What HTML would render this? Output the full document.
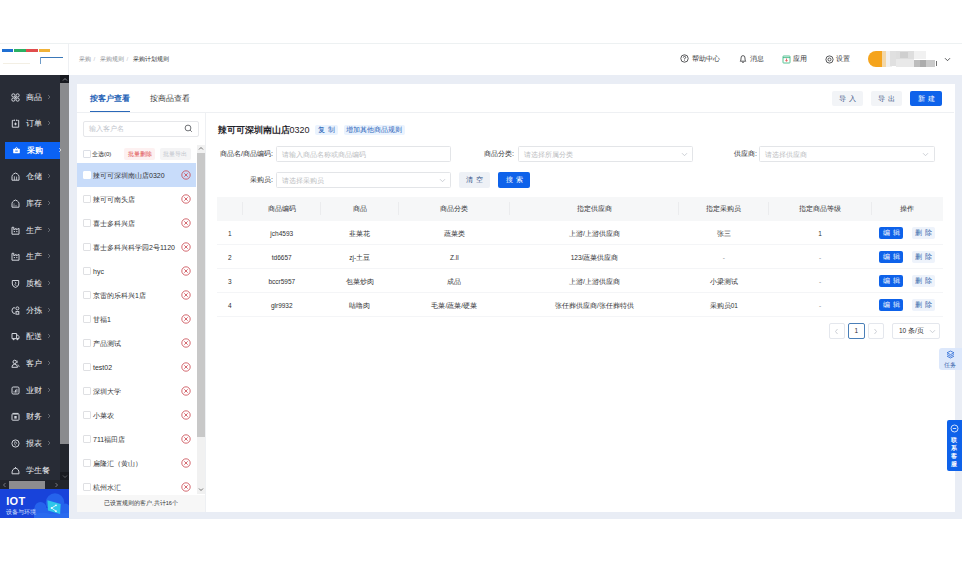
<!DOCTYPE html>
<html><head><meta charset="utf-8"><style>
*{box-sizing:border-box}
html,body{margin:0;padding:0;width:962px;height:562px;overflow:hidden;background:#fff;font-family:"Liberation Sans",sans-serif;color:#303133}
.a{position:absolute;white-space:nowrap}
.mi{position:absolute;left:0;width:60px;height:17px;color:#eceef2;font-size:8px;line-height:17px;font-weight:500}
.mi .t{position:absolute;left:26px;top:0}
.mi .ar{position:absolute;left:46px;top:0;width:4px;height:17px}
.mi svg.ic{position:absolute;left:11px;top:4px}
.mi.act{left:4.5px;width:55.5px;background:#0b62f4;color:#fff;font-weight:bold}
.mi.act .t{left:22px}.mi.act svg.ic{left:7px}.mi.act .ar{left:52px}.mi.act svg.ic{top:3.3px}
.li{position:absolute;left:77px;width:119px;height:24px;font-size:7px;line-height:24px;color:#303133}
.li .cb{position:absolute;left:6px;top:8px;width:8px;height:8px;border:1px solid #dfe0e3;border-radius:1px;background:#fff}
.li .t{position:absolute;left:16px;top:1px}
.li svg{position:absolute;left:104px;top:7px}
.btn{position:absolute;font-size:6.5px;text-align:center;border-radius:2px;letter-spacing:3px;padding-left:3px;white-space:nowrap;font-weight:500}
.th{position:absolute;top:196px;height:25px;line-height:25px;font-size:6.5px;color:#303133;text-align:center;white-space:nowrap}
.td{position:absolute;height:24px;line-height:24px;font-size:6.5px;color:#303133;text-align:center;white-space:nowrap}
.inp{position:absolute;height:15.5px;border:1px solid #e3e5e8;border-radius:1.5px;background:#fff;font-size:6.5px;line-height:15px;color:#babcc0;padding-left:5px;white-space:nowrap}
.lbl{position:absolute;font-size:7.2px;line-height:15px;color:#303133;text-align:right;white-space:nowrap}
</style></head><body>
<div class="a" style="left:0;top:43px;width:962px;height:31.5px;background:#fff;border-top:1px solid #edf1f2"></div>
<div class="a" style="left:68px;top:44px;width:1px;height:31px;background:#eef0f3"></div>
<div class="a" style="left:2px;top:49px;width:11px;height:3.3px;background:#1f6fd2"></div>
<div class="a" style="left:14px;top:49px;width:11.5px;height:3.3px;background:#2bb063"></div>
<div class="a" style="left:26.2px;top:49px;width:11.6px;height:3.3px;background:#e04c4c"></div>
<div class="a" style="left:38.9px;top:49px;width:11.3px;height:3.3px;background:#f0b238"></div>
<div class="a" style="left:40px;top:56.6px;width:22.6px;height:1px;background:#3b78b8"></div>
<div class="a" style="left:40px;top:56.6px;width:0.8px;height:7px;background:#6f9cc8"></div>
<div class="a" style="left:3px;top:63px;width:27px;height:1px;background:#f3efe4"></div>
<div class="a" style="left:78.5px;top:55px;font-size:6.1px;line-height:8px;color:#8c8f94">采购</div>
<div class="a" style="left:93.6px;top:55px;font-size:6px;line-height:8px;color:#c0c4cc">/</div>
<div class="a" style="left:99.5px;top:55px;font-size:6.1px;line-height:8px;color:#8c8f94">采购规则</div>
<div class="a" style="left:126.5px;top:55px;font-size:6px;line-height:8px;color:#c0c4cc">/</div>
<div class="a" style="left:133px;top:55px;font-size:6.1px;line-height:8px;color:#303133;font-weight:500">采购计划规则</div>
<div class="a" style="left:0;top:75px;width:69px;height:443px;background:#282c36"></div>
<div class="a" style="left:60px;top:75px;width:9px;height:405px;background:#22252c"></div>
<div class="a" style="left:60px;top:83px;width:9px;height:360.5px;background:#8a8b8e"></div>
<div class="a" style="left:60px;top:75px;width:9px;height:8px;background:#17191f"></div>
<svg class="a" style="left:61.5px;top:76.5px" width="6" height="5" viewBox="0 0 6 5"><path d="M1 3.5L3 1.5L5 3.5" stroke="#9a9ca2" stroke-width="0.8" fill="none"/></svg>
<div class="a" style="left:60px;top:472px;width:9px;height:8px;background:#191b21"></div>
<svg class="a" style="left:61.5px;top:473.5px" width="6" height="5" viewBox="0 0 6 5"><path d="M1 1.5L3 3.5L5 1.5" stroke="#6a6c72" stroke-width="0.8" fill="none"/></svg>
<div class="a" style="left:0;top:480px;width:69px;height:9px;background:#22252c"></div>
<div class="a" style="left:9px;top:480.5px;width:36px;height:8.2px;background:#8d8d8f"></div>
<svg class="a" style="left:2px;top:482px" width="5" height="6" viewBox="0 0 5 6"><path d="M3.5 1L1.5 3L3.5 5" stroke="#8a8c92" stroke-width="0.8" fill="none"/></svg>
<svg class="a" style="left:54px;top:482px" width="5" height="6" viewBox="0 0 5 6"><path d="M1.5 1L3.5 3L1.5 5" stroke="#8a8c92" stroke-width="0.8" fill="none"/></svg>
<div class="mi" style="top:88.50px"><svg class="ic" width="9" height="9" viewBox="0 0 9 9"><circle cx="2.4" cy="2.4" r="1.6" stroke="#d2d5dc" stroke-width="1" fill="none"/><circle cx="6.6" cy="2.4" r="1.6" stroke="#d2d5dc" stroke-width="1" fill="none"/><circle cx="2.4" cy="6.6" r="1.6" stroke="#d2d5dc" stroke-width="1" fill="none"/><circle cx="6.6" cy="6.6" r="1.6" stroke="#d2d5dc" stroke-width="1" fill="none"/><path d="M3.6 3.6h1.8v1.8h-1.8z" fill="#d2d5dc"/></svg><span class="t">商品</span><svg class="ar" width="4" height="17" viewBox="0 0 4 17"><path d="M2 6L4 8L2 10" stroke="#8a8e96" stroke-width="0.6" fill="none"/></svg></div>
<div class="mi" style="top:115.15px"><svg class="ic" width="9" height="9" viewBox="0 0 9 9"><path d="M2.6 1.4H1.3V8.2H7.7V1.4H6.4" stroke="#d2d5dc" stroke-width="1" fill="none"/><circle cx="3.4" cy="1.2" r="0.75" fill="#d2d5dc"/><circle cx="5.6" cy="1.2" r="0.75" fill="#d2d5dc"/><path d="M4.5 3.3L5.8 4.9L4.5 6.5L3.2 4.9z" fill="#d2d5dc"/></svg><span class="t">订单</span><svg class="ar" width="4" height="17" viewBox="0 0 4 17"><path d="M2 6L4 8L2 10" stroke="#8a8e96" stroke-width="0.6" fill="none"/></svg></div>
<div class="mi act" style="top:141.80px"><svg class="ic" width="9" height="9" viewBox="0 0 9 9"><rect x="1.2" y="3.8" width="6.6" height="4.4" rx="0.4" fill="#fff"/><path d="M3 3.8Q4.5 1 6 3.8" stroke="#fff" stroke-width="1" fill="none"/><path d="M3.2 6.1H5.8" stroke="#0b62f4" stroke-width="0.9"/></svg><span class="t">采购</span><svg class="ar" width="4" height="17" viewBox="0 0 4 17"><path d="M2 6L4 8L2 10" stroke="#fff" stroke-width="0.6" fill="none"/></svg></div>
<div class="mi" style="top:168.45px"><svg class="ic" width="9" height="9" viewBox="0 0 9 9"><path d="M1 8.2V4.6Q1 3 2.6 2L4.5 1L6.4 2Q8 3 8 4.6V8.2z" stroke="#d2d5dc" stroke-width="1" fill="none"/><path d="M3.4 4.3V8.2M5.6 4.6V8.2" stroke="#d2d5dc" stroke-width="0.8"/></svg><span class="t">仓储</span><svg class="ar" width="4" height="17" viewBox="0 0 4 17"><path d="M2 6L4 8L2 10" stroke="#8a8e96" stroke-width="0.6" fill="none"/></svg></div>
<div class="mi" style="top:195.10px"><svg class="ic" width="9" height="9" viewBox="0 0 9 9"><path d="M1 8.2V4.6Q1 3 2.6 2L4.5 1L6.4 2Q8 3 8 4.6V8.2z" stroke="#d2d5dc" stroke-width="1" fill="none"/><circle cx="3" cy="5" r="0.55" fill="#d2d5dc"/><circle cx="3" cy="6.8" r="0.55" fill="#d2d5dc"/><circle cx="5" cy="6.8" r="0.55" fill="#d2d5dc"/></svg><span class="t">库存</span><svg class="ar" width="4" height="17" viewBox="0 0 4 17"><path d="M2 6L4 8L2 10" stroke="#8a8e96" stroke-width="0.6" fill="none"/></svg></div>
<div class="mi" style="top:221.75px"><svg class="ic" width="9" height="9" viewBox="0 0 9 9"><path d="M1 8.2V1.3H2.8V3.8L5.2 2.4V3.8L8 2.4V8.2z" stroke="#d2d5dc" stroke-width="1" fill="none"/><path d="M2.8 5.6h1.2M5.2 5.6h1.2" stroke="#d2d5dc" stroke-width="1"/></svg><span class="t">生产</span><svg class="ar" width="4" height="17" viewBox="0 0 4 17"><path d="M2 6L4 8L2 10" stroke="#8a8e96" stroke-width="0.6" fill="none"/></svg></div>
<div class="mi" style="top:248.40px"><svg class="ic" width="9" height="9" viewBox="0 0 9 9"><path d="M1 8.2V1.3H2.8V3.8L5.2 2.4V3.8L8 2.4V8.2z" stroke="#d2d5dc" stroke-width="1" fill="none"/><path d="M2.8 5.6h1.2M5.2 5.6h1.2" stroke="#d2d5dc" stroke-width="1"/></svg><span class="t">生产</span><svg class="ar" width="4" height="17" viewBox="0 0 4 17"><path d="M2 6L4 8L2 10" stroke="#8a8e96" stroke-width="0.6" fill="none"/></svg></div>
<div class="mi" style="top:275.05px"><svg class="ic" width="9" height="9" viewBox="0 0 9 9"><path d="M1.3 1.5H7.7V5Q7.7 7.4 4.5 8.5Q1.3 7.4 1.3 5z" stroke="#d2d5dc" stroke-width="1" fill="none"/><path d="M3.8 2.8L5.2 4.2L3.8 5.4L5.4 7" stroke="#d2d5dc" stroke-width="0.8" fill="none"/></svg><span class="t">质检</span><svg class="ar" width="4" height="17" viewBox="0 0 4 17"><path d="M2 6L4 8L2 10" stroke="#8a8e96" stroke-width="0.6" fill="none"/></svg></div>
<div class="mi" style="top:301.70px"><svg class="ic" width="9" height="9" viewBox="0 0 9 9"><path d="M3.2 1.6Q1 1.8 1 4.5Q1 7.2 3.2 7.4" stroke="#d2d5dc" stroke-width="1" fill="none"/><circle cx="3.3" cy="1.8" r="0.6" fill="#d2d5dc"/><circle cx="3.3" cy="7.3" r="0.6" fill="#d2d5dc"/><circle cx="6.4" cy="2.4" r="1.5" stroke="#d2d5dc" stroke-width="1" fill="none"/><rect x="5" y="5.6" width="2.8" height="2.6" stroke="#d2d5dc" stroke-width="1" fill="none"/></svg><span class="t">分拣</span><svg class="ar" width="4" height="17" viewBox="0 0 4 17"><path d="M2 6L4 8L2 10" stroke="#8a8e96" stroke-width="0.6" fill="none"/></svg></div>
<div class="mi" style="top:328.35px"><svg class="ic" width="9" height="9" viewBox="0 0 9 9"><path d="M1 1.5H5.6V6.6H1z" stroke="#d2d5dc" stroke-width="1" fill="none"/><path d="M5.6 3.2H6.9L8 4.6V6.6H5.6" stroke="#d2d5dc" stroke-width="1" fill="none"/><circle cx="2.6" cy="7.2" r="0.95" fill="#d2d5dc"/><circle cx="6.4" cy="7.2" r="0.95" fill="#d2d5dc"/></svg><span class="t">配送</span><svg class="ar" width="4" height="17" viewBox="0 0 4 17"><path d="M2 6L4 8L2 10" stroke="#8a8e96" stroke-width="0.6" fill="none"/></svg></div>
<div class="mi" style="top:355.00px"><svg class="ic" width="9" height="9" viewBox="0 0 9 9"><circle cx="3.7" cy="2.9" r="1.7" stroke="#d2d5dc" stroke-width="1" fill="none"/><path d="M0.9 8.3Q0.9 5.3 3.7 5.3Q6.5 5.3 6.5 8.3z" stroke="#d2d5dc" stroke-width="1" fill="none"/><path d="M5.9 1.4Q6.8 2.4 6 4M6.6 5.4Q8 6.2 8.2 8" stroke="#d2d5dc" stroke-width="0.8" fill="none"/></svg><span class="t">客户</span><svg class="ar" width="4" height="17" viewBox="0 0 4 17"><path d="M2 6L4 8L2 10" stroke="#8a8e96" stroke-width="0.6" fill="none"/></svg></div>
<div class="mi" style="top:381.65px"><svg class="ic" width="9" height="9" viewBox="0 0 9 9"><rect x="1" y="1" width="7" height="7" rx="1.2" stroke="#d2d5dc" stroke-width="1" fill="none"/><path d="M3.1 6.6V5.2M4.5 6.6V3.8M5.9 6.6V2.8" stroke="#d2d5dc" stroke-width="0.9"/></svg><span class="t">业财</span><svg class="ar" width="4" height="17" viewBox="0 0 4 17"><path d="M2 6L4 8L2 10" stroke="#8a8e96" stroke-width="0.6" fill="none"/></svg></div>
<div class="mi" style="top:408.30px"><svg class="ic" width="9" height="9" viewBox="0 0 9 9"><rect x="1" y="2" width="7" height="6.2" rx="0.6" stroke="#d2d5dc" stroke-width="1" fill="none"/><path d="M1.6 1.4H7.4" stroke="#d2d5dc" stroke-width="1"/><rect x="3.3" y="4" width="2.4" height="2.6" fill="#d2d5dc"/></svg><span class="t">财务</span><svg class="ar" width="4" height="17" viewBox="0 0 4 17"><path d="M2 6L4 8L2 10" stroke="#8a8e96" stroke-width="0.6" fill="none"/></svg></div>
<div class="mi" style="top:434.95px"><svg class="ic" width="9" height="9" viewBox="0 0 9 9"><circle cx="4.5" cy="4.5" r="3.6" stroke="#d2d5dc" stroke-width="1" fill="none"/><path d="M4.2 2.2Q2.8 4.6 4.6 6.6M4.8 2.8L5.8 4.8" stroke="#d2d5dc" stroke-width="0.8" fill="none"/></svg><span class="t">报表</span><svg class="ar" width="4" height="17" viewBox="0 0 4 17"><path d="M2 6L4 8L2 10" stroke="#8a8e96" stroke-width="0.6" fill="none"/></svg></div>
<div class="mi" style="top:461.60px"><svg class="ic" width="9" height="9" viewBox="0 0 9 9"><path d="M1 7.8H8V7.2Q8 2.6 4.5 2.3Q1 2.6 1 7.2z" stroke="#d2d5dc" stroke-width="1" fill="none"/><path d="M4.5 1v1.3" stroke="#d2d5dc" stroke-width="1" fill="none"/></svg><span class="t">学生餐</span></div>
<div class="a" style="left:0;top:488.7px;width:68.5px;height:29.8px;background:#1843da;overflow:hidden"><svg style="position:absolute;left:30px;top:0" width="40" height="30" viewBox="0 0 40 30"><g fill="#2563ec"><circle cx="10.5" cy="19" r="6"/><circle cx="25" cy="13.5" r="9.2"/><circle cx="35" cy="19.5" r="5"/><rect x="4" y="19" width="36" height="11"/></g><path d="M4 26Q12 22 20 25L40 24V30H4z" fill="#2d6ff2" opacity="0.6"/><path d="M17.4 11.2L30.7 14.9L30.1 25.1L18 21.5z" fill="#2ec6ea"/><path d="M26 16.3L21.6 19L26 22.2" stroke="#e6fbff" stroke-width="0.9" fill="none"/><circle cx="26" cy="16.3" r="0.9" fill="#e6fbff"/><circle cx="21.6" cy="19" r="0.9" fill="#e6fbff"/><circle cx="26" cy="22.2" r="0.9" fill="#e6fbff"/></svg><div class="a" style="left:6.2px;top:7px;font-size:11px;line-height:11px;font-weight:bold;color:#fff;letter-spacing:0.3px">IOT</div><div class="a" style="left:6.3px;top:20px;font-size:5.9px;line-height:7px;color:#d8e4ff">设备与环境</div></div>
<div class="a" style="left:69px;top:74.5px;width:893px;height:444px;background:#e9edf5"></div>
<div class="a" style="left:77px;top:84px;width:877.5px;height:428px;background:#fff"></div>
<div class="a" style="left:90px;top:93px;font-size:8px;line-height:12px;color:#2462b6;font-weight:bold">按客户查看</div>
<div class="a" style="left:90px;top:111px;width:40px;height:2px;background:#2a68b8"></div>
<div class="a" style="left:150px;top:93px;font-size:8px;line-height:12px;color:#3a3a3c;font-weight:500">按商品查看</div>
<div class="a" style="left:77px;top:112px;width:877px;height:1px;background:#eef0f3"></div>
<div class="btn" style="left:832px;top:90.5px;width:31px;height:15.5px;line-height:15.5px;background:#f2f4f7;color:#3b5486">导入</div>
<div class="btn" style="left:871px;top:90.5px;width:31px;height:15.5px;line-height:15.5px;background:#f2f4f7;color:#3b5486">导出</div>
<div class="btn" style="left:910px;top:90.5px;width:32px;height:15.5px;line-height:15.5px;background:#0e62ea;color:#fff">新建</div>
<div class="a" style="left:205px;top:113px;width:1px;height:399px;background:#eef0f3"></div>
<div class="a" style="left:82.5px;top:120.5px;width:116px;height:16px;border:1px solid #e6e7ea;border-radius:2px;font-size:6.5px;line-height:14px;color:#c0c4cc;padding-left:5.5px">输入客户名</div>
<svg class="a" style="left:184px;top:124px" width="9" height="9" viewBox="0 0 9 9"><circle cx="4" cy="4" r="2.9" stroke="#606266" stroke-width="0.9" fill="none"/><path d="M6.1 6.1L7.8 7.8" stroke="#606266" stroke-width="0.9"/></svg>
<div class="a" style="left:83px;top:149.5px;width:7.5px;height:8px;border:1px solid #dcdfe6;border-radius:1px"></div>
<div class="a" style="left:92px;top:150px;font-size:6px;line-height:8px;color:#303133">全选(0)</div>
<div class="btn" style="left:124px;top:147.5px;width:31px;height:12px;line-height:12px;background:#fdf1f1;color:#dc4444;letter-spacing:0;padding-left:0;font-size:5.9px;font-weight:normal">批量删除</div>
<div class="btn" style="left:159.5px;top:147.5px;width:31px;height:12px;line-height:12px;background:#f4f4f5;color:#c0c4cc;letter-spacing:0;padding-left:0;font-size:5.9px;font-weight:normal">批量导出</div>
<div class="a" style="left:196.5px;top:145px;width:8.5px;height:349px;background:#f1f1f1"></div>
<div class="a" style="left:196.5px;top:153px;width:8.5px;height:284px;background:#c8c8c8"></div>
<svg class="a" style="left:198px;top:146px" width="6" height="5" viewBox="0 0 6 5"><path d="M1 3.5L3 1.5L5 3.5" stroke="#505050" stroke-width="0.8" fill="none"/></svg>
<svg class="a" style="left:198px;top:487px" width="6" height="5" viewBox="0 0 6 5"><path d="M1 1.5L3 3.5L5 1.5" stroke="#505050" stroke-width="0.8" fill="none"/></svg>
<div class="li" style="top:163px;background:#c8dcfa;"><div class="cb" style="border-color:#fff;"></div><span class="t">辣可可深圳南山店0320</span><svg width="10" height="10" viewBox="0 0 10 10"><circle cx="5" cy="5" r="4.2" stroke="#c9444c" stroke-width="0.8" fill="none"/><path d="M3.3 3.3L6.7 6.7M6.7 3.3L3.3 6.7" stroke="#c9444c" stroke-width="0.8"/></svg></div>
<div class="li" style="top:187px;"><div class="cb" style=""></div><span class="t">辣可可南头店</span><svg width="10" height="10" viewBox="0 0 10 10"><circle cx="5" cy="5" r="4.2" stroke="#c9444c" stroke-width="0.8" fill="none"/><path d="M3.3 3.3L6.7 6.7M6.7 3.3L3.3 6.7" stroke="#c9444c" stroke-width="0.8"/></svg></div>
<div class="li" style="top:211px;"><div class="cb" style=""></div><span class="t">喜士多科兴店</span><svg width="10" height="10" viewBox="0 0 10 10"><circle cx="5" cy="5" r="4.2" stroke="#c9444c" stroke-width="0.8" fill="none"/><path d="M3.3 3.3L6.7 6.7M6.7 3.3L3.3 6.7" stroke="#c9444c" stroke-width="0.8"/></svg></div>
<div class="li" style="top:235px;"><div class="cb" style=""></div><span class="t">喜士多科兴科学园2号1120</span><svg width="10" height="10" viewBox="0 0 10 10"><circle cx="5" cy="5" r="4.2" stroke="#c9444c" stroke-width="0.8" fill="none"/><path d="M3.3 3.3L6.7 6.7M6.7 3.3L3.3 6.7" stroke="#c9444c" stroke-width="0.8"/></svg></div>
<div class="li" style="top:259px;"><div class="cb" style=""></div><span class="t">hyc</span><svg width="10" height="10" viewBox="0 0 10 10"><circle cx="5" cy="5" r="4.2" stroke="#c9444c" stroke-width="0.8" fill="none"/><path d="M3.3 3.3L6.7 6.7M6.7 3.3L3.3 6.7" stroke="#c9444c" stroke-width="0.8"/></svg></div>
<div class="li" style="top:283px;"><div class="cb" style=""></div><span class="t">京雷的乐科兴1店</span><svg width="10" height="10" viewBox="0 0 10 10"><circle cx="5" cy="5" r="4.2" stroke="#c9444c" stroke-width="0.8" fill="none"/><path d="M3.3 3.3L6.7 6.7M6.7 3.3L3.3 6.7" stroke="#c9444c" stroke-width="0.8"/></svg></div>
<div class="li" style="top:307px;"><div class="cb" style=""></div><span class="t">甘福1</span><svg width="10" height="10" viewBox="0 0 10 10"><circle cx="5" cy="5" r="4.2" stroke="#c9444c" stroke-width="0.8" fill="none"/><path d="M3.3 3.3L6.7 6.7M6.7 3.3L3.3 6.7" stroke="#c9444c" stroke-width="0.8"/></svg></div>
<div class="li" style="top:331px;"><div class="cb" style=""></div><span class="t">产品测试</span><svg width="10" height="10" viewBox="0 0 10 10"><circle cx="5" cy="5" r="4.2" stroke="#c9444c" stroke-width="0.8" fill="none"/><path d="M3.3 3.3L6.7 6.7M6.7 3.3L3.3 6.7" stroke="#c9444c" stroke-width="0.8"/></svg></div>
<div class="li" style="top:355px;"><div class="cb" style=""></div><span class="t">test02</span><svg width="10" height="10" viewBox="0 0 10 10"><circle cx="5" cy="5" r="4.2" stroke="#c9444c" stroke-width="0.8" fill="none"/><path d="M3.3 3.3L6.7 6.7M6.7 3.3L3.3 6.7" stroke="#c9444c" stroke-width="0.8"/></svg></div>
<div class="li" style="top:379px;"><div class="cb" style=""></div><span class="t">深圳大学</span><svg width="10" height="10" viewBox="0 0 10 10"><circle cx="5" cy="5" r="4.2" stroke="#c9444c" stroke-width="0.8" fill="none"/><path d="M3.3 3.3L6.7 6.7M6.7 3.3L3.3 6.7" stroke="#c9444c" stroke-width="0.8"/></svg></div>
<div class="li" style="top:403px;"><div class="cb" style=""></div><span class="t">小菜农</span><svg width="10" height="10" viewBox="0 0 10 10"><circle cx="5" cy="5" r="4.2" stroke="#c9444c" stroke-width="0.8" fill="none"/><path d="M3.3 3.3L6.7 6.7M6.7 3.3L3.3 6.7" stroke="#c9444c" stroke-width="0.8"/></svg></div>
<div class="li" style="top:427px;"><div class="cb" style=""></div><span class="t">711福田店</span><svg width="10" height="10" viewBox="0 0 10 10"><circle cx="5" cy="5" r="4.2" stroke="#c9444c" stroke-width="0.8" fill="none"/><path d="M3.3 3.3L6.7 6.7M6.7 3.3L3.3 6.7" stroke="#c9444c" stroke-width="0.8"/></svg></div>
<div class="li" style="top:451px;"><div class="cb" style=""></div><span class="t">扁隆汇（黄山）</span><svg width="10" height="10" viewBox="0 0 10 10"><circle cx="5" cy="5" r="4.2" stroke="#c9444c" stroke-width="0.8" fill="none"/><path d="M3.3 3.3L6.7 6.7M6.7 3.3L3.3 6.7" stroke="#c9444c" stroke-width="0.8"/></svg></div>
<div class="li" style="top:475px;"><div class="cb" style=""></div><span class="t">杭州水汇</span><svg width="10" height="10" viewBox="0 0 10 10"><circle cx="5" cy="5" r="4.2" stroke="#c9444c" stroke-width="0.8" fill="none"/><path d="M3.3 3.3L6.7 6.7M6.7 3.3L3.3 6.7" stroke="#c9444c" stroke-width="0.8"/></svg></div>
<div class="a" style="left:77px;top:494.5px;width:128px;height:17.5px;background:#f7f7f7;font-size:5.6px;line-height:17px;text-align:center;color:#303133">已设置规则的客户,共计16个</div>
<div class="a" style="left:217.5px;top:123.7px;font-size:9px;line-height:13px;font-weight:bold;color:#1f2329">辣可可深圳南山店<span style="font-weight:normal">0320</span></div>
<div class="btn" style="left:315px;top:124.5px;width:22.5px;height:10.5px;line-height:10.5px;background:#eaf3fe;color:#2a64b8;letter-spacing:2.5px;padding-left:2.5px;font-size:6.5px">复制</div>
<div class="btn" style="left:343.5px;top:124.5px;width:61px;height:10.5px;line-height:10.5px;background:#eaf3fe;color:#2a64b8;letter-spacing:0;padding-left:0;font-size:6.5px;font-weight:normal">增加其他商品规则</div>
<div class="lbl" style="left:200px;width:73px;top:146px">商品名/商品编码:</div>
<div class="inp" style="left:276px;top:146px;width:175px">请输入商品名称或商品编码</div>
<div class="lbl" style="left:430px;width:84px;top:146px">商品分类:</div>
<div class="inp" style="left:517.5px;top:146px;width:175px">请选择所属分类</div>
<div class="lbl" style="left:680px;width:77px;top:146px">供应商:</div>
<div class="inp" style="left:759px;top:146px;width:175.5px">请选择供应商</div>
<div class="lbl" style="left:200px;width:73px;top:172px">采购员:</div>
<div class="inp" style="left:276px;top:172px;width:175px">请选择采购员</div>
<svg class="a" style="left:439px;top:178px" width="7" height="5" viewBox="0 0 7 5"><path d="M1 1.2L3.5 3.7L6 1.2" stroke="#c0c4cc" stroke-width="0.8" fill="none"/></svg>
<svg class="a" style="left:680.5px;top:151.5px" width="7" height="5" viewBox="0 0 7 5"><path d="M1 1.2L3.5 3.7L6 1.2" stroke="#c0c4cc" stroke-width="0.8" fill="none"/></svg>
<svg class="a" style="left:922px;top:151.5px" width="7" height="5" viewBox="0 0 7 5"><path d="M1 1.2L3.5 3.7L6 1.2" stroke="#c0c4cc" stroke-width="0.8" fill="none"/></svg>
<div class="btn" style="left:459px;top:172px;width:31px;height:15.5px;line-height:15.5px;background:#eef1f6;color:#2f4f86">清空</div>
<div class="btn" style="left:498px;top:172px;width:32px;height:15.5px;line-height:15.5px;background:#0e62ea;color:#fff">搜索</div>
<div class="a" style="left:217px;top:196.5px;width:726px;height:24.5px;background:#f6f7f8"></div>
<div class="th" style="left:217px;width:25.5px"></div>
<div class="th" style="left:242.5px;width:78.5px">商品编码</div>
<div class="a" style="left:241.8px;top:202px;width:1px;height:13px;background:#ebecee"></div>
<div class="th" style="left:321px;width:77.5px">商品</div>
<div class="a" style="left:320.3px;top:202px;width:1px;height:13px;background:#ebecee"></div>
<div class="th" style="left:398.5px;width:111.5px">商品分类</div>
<div class="a" style="left:397.8px;top:202px;width:1px;height:13px;background:#ebecee"></div>
<div class="th" style="left:510px;width:169px">指定供应商</div>
<div class="a" style="left:509.3px;top:202px;width:1px;height:13px;background:#ebecee"></div>
<div class="th" style="left:679px;width:89.5px">指定采购员</div>
<div class="a" style="left:678.3px;top:202px;width:1px;height:13px;background:#ebecee"></div>
<div class="th" style="left:768.5px;width:103.0px">指定商品等级</div>
<div class="a" style="left:767.8px;top:202px;width:1px;height:13px;background:#ebecee"></div>
<div class="th" style="left:871.5px;width:71.5px">操作</div>
<div class="a" style="left:870.8px;top:202px;width:1px;height:13px;background:#ebecee"></div>
<div class="a" style="left:217px;top:244px;width:726px;height:1px;background:#f4f5f7"></div>
<div class="td" style="left:217px;width:25.5px;top:222px;color:#303133;text-align:left;padding-left:11px;">1</div>
<div class="td" style="left:242.5px;width:78.5px;top:222px;color:#303133;">jch4593</div>
<div class="td" style="left:321px;width:77.5px;top:222px;color:#303133;">韭菜花</div>
<div class="td" style="left:398.5px;width:111.5px;top:222px;color:#303133;">蔬菜类</div>
<div class="td" style="left:510px;width:169px;top:222px;color:#303133;">上游/上游供应商</div>
<div class="td" style="left:679px;width:89.5px;top:222px;color:#303133;">张三</div>
<div class="td" style="left:768.5px;width:103.0px;top:222px;color:#303133;">1</div>
<div class="btn" style="left:879px;top:227px;width:24px;height:12px;line-height:12px;background:#0e62ea;color:#fff">编辑</div>
<div class="btn" style="left:911.5px;top:227px;width:23.5px;height:12px;line-height:12px;background:#eef3fb;color:#2d5ba6">删除</div>
<div class="a" style="left:217px;top:268px;width:726px;height:1px;background:#f4f5f7"></div>
<div class="td" style="left:217px;width:25.5px;top:246px;color:#303133;text-align:left;padding-left:11px;">2</div>
<div class="td" style="left:242.5px;width:78.5px;top:246px;color:#303133;">td6657</div>
<div class="td" style="left:321px;width:77.5px;top:246px;color:#303133;">zj-土豆</div>
<div class="td" style="left:398.5px;width:111.5px;top:246px;color:#303133;">Z.ll</div>
<div class="td" style="left:510px;width:169px;top:246px;color:#303133;">123/蔬菜供应商</div>
<div class="td" style="left:679px;width:89.5px;top:246px;color:#909399;">-</div>
<div class="td" style="left:768.5px;width:103.0px;top:246px;color:#909399;">-</div>
<div class="btn" style="left:879px;top:251px;width:24px;height:12px;line-height:12px;background:#0e62ea;color:#fff">编辑</div>
<div class="btn" style="left:911.5px;top:251px;width:23.5px;height:12px;line-height:12px;background:#eef3fb;color:#2d5ba6">删除</div>
<div class="a" style="left:217px;top:292px;width:726px;height:1px;background:#f4f5f7"></div>
<div class="td" style="left:217px;width:25.5px;top:270px;color:#303133;text-align:left;padding-left:11px;">3</div>
<div class="td" style="left:242.5px;width:78.5px;top:270px;color:#303133;">bccr5957</div>
<div class="td" style="left:321px;width:77.5px;top:270px;color:#303133;">包菜炒肉</div>
<div class="td" style="left:398.5px;width:111.5px;top:270px;color:#303133;">成品</div>
<div class="td" style="left:510px;width:169px;top:270px;color:#303133;">上游/上游供应商</div>
<div class="td" style="left:679px;width:89.5px;top:270px;color:#303133;">小梁测试</div>
<div class="td" style="left:768.5px;width:103.0px;top:270px;color:#909399;">-</div>
<div class="btn" style="left:879px;top:275px;width:24px;height:12px;line-height:12px;background:#0e62ea;color:#fff">编辑</div>
<div class="btn" style="left:911.5px;top:275px;width:23.5px;height:12px;line-height:12px;background:#eef3fb;color:#2d5ba6">删除</div>
<div class="a" style="left:217px;top:316px;width:726px;height:1px;background:#f4f5f7"></div>
<div class="td" style="left:217px;width:25.5px;top:294px;color:#303133;text-align:left;padding-left:11px;">4</div>
<div class="td" style="left:242.5px;width:78.5px;top:294px;color:#303133;">glr9932</div>
<div class="td" style="left:321px;width:77.5px;top:294px;color:#303133;">咕噜肉</div>
<div class="td" style="left:398.5px;width:111.5px;top:294px;color:#303133;">毛菜/蔬菜/硬菜</div>
<div class="td" style="left:510px;width:169px;top:294px;color:#303133;">张任葬供应商/张任葬特供</div>
<div class="td" style="left:679px;width:89.5px;top:294px;color:#303133;">采购员01</div>
<div class="td" style="left:768.5px;width:103.0px;top:294px;color:#909399;">-</div>
<div class="btn" style="left:879px;top:299px;width:24px;height:12px;line-height:12px;background:#0e62ea;color:#fff">编辑</div>
<div class="btn" style="left:911.5px;top:299px;width:23.5px;height:12px;line-height:12px;background:#eef3fb;color:#2d5ba6">删除</div>
<div class="a" style="left:829px;top:323px;width:15.5px;height:16px;border:1px solid #e4e7ed;border-radius:2px"></div>
<svg class="a" style="left:834px;top:328px" width="5" height="7" viewBox="0 0 5 7"><path d="M3.5 1L1.5 3.5L3.5 6" stroke="#c0c4cc" stroke-width="0.8" fill="none"/></svg>
<div class="a" style="left:848px;top:323px;width:16.5px;height:16px;border:1px solid #4a7fb8;border-radius:2px;font-size:6.5px;line-height:14px;text-align:center;color:#303133">1</div>
<div class="a" style="left:868px;top:323px;width:15.5px;height:16px;border:1px solid #e4e7ed;border-radius:2px"></div>
<svg class="a" style="left:873px;top:328px" width="5" height="7" viewBox="0 0 5 7"><path d="M1.5 1L3.5 3.5L1.5 6" stroke="#c0c4cc" stroke-width="0.8" fill="none"/></svg>
<div class="a" style="left:892px;top:323px;width:48px;height:16px;border:1px solid #e4e7ed;border-radius:2px;font-size:6.5px;line-height:14px;color:#303133;padding-left:6px">10 条/页</div>
<svg class="a" style="left:929px;top:329px" width="7" height="5" viewBox="0 0 7 5"><path d="M1 1.2L3.5 3.7L6 1.2" stroke="#c0c4cc" stroke-width="0.8" fill="none"/></svg>
<div class="a" style="left:939px;top:348px;width:23px;height:22px;background:#dde8fb;border-radius:3px 0 0 3px"></div>
<svg class="a" style="left:946px;top:350px" width="9" height="9" viewBox="0 0 9 9"><path d="M4.5 1L8 2.8L4.5 4.6L1 2.8z" stroke="#2a6ad6" stroke-width="0.8" fill="none"/><path d="M1 4.5L4.5 6.3L8 4.5M1 6.2L4.5 8L8 6.2" stroke="#2a6ad6" stroke-width="0.8" fill="none"/></svg>
<div class="a" style="left:943.5px;top:361px;font-size:6.2px;line-height:8px;color:#2d5ba6;font-weight:500">任务</div>
<div class="a" style="left:947px;top:419.5px;width:15px;height:51px;background:#0e62ea;border-radius:2px 0 0 2px"></div>
<svg class="a" style="left:950px;top:424px" width="9" height="9" viewBox="0 0 9 9"><circle cx="4.5" cy="4.5" r="3.5" stroke="#fff" stroke-width="0.8" fill="none"/><path d="M2.8 4.5h3.4" stroke="#fff" stroke-width="0.8"/></svg>
<div class="a" style="left:950.8px;top:435.5px;width:7px;font-size:6.2px;line-height:8.2px;color:#fff;white-space:normal;font-weight:bold">联系客服</div>
<svg class="a" style="left:680px;top:54px" width="9" height="9" viewBox="0 0 9 9"><circle cx="4.5" cy="4.5" r="3.7" stroke="#303133" stroke-width="0.8" fill="none"/><path d="M3.3 3.6Q3.4 2.4 4.5 2.4Q5.7 2.4 5.7 3.5Q5.7 4.3 4.5 4.7V5.4" stroke="#303133" stroke-width="0.8" fill="none"/><circle cx="4.5" cy="6.5" r="0.45" fill="#303133"/></svg>
<div class="a" style="left:692px;top:55px;font-size:7px;line-height:8px;color:#303133">帮助中心</div>
<svg class="a" style="left:739px;top:54px" width="8" height="10" viewBox="0 0 8 10"><path d="M1.2 7.2Q2 6.5 2 5V4Q2 1.6 4 1.6Q6 1.6 6 4V5Q6 6.5 6.8 7.2z" stroke="#303133" stroke-width="0.8" fill="none"/><path d="M3.2 8.4h1.6" stroke="#303133" stroke-width="0.8" fill="none"/></svg>
<div class="a" style="left:750px;top:55px;font-size:7px;line-height:8px;color:#303133">消息</div>
<svg class="a" style="left:781.5px;top:54.5px" width="9" height="9" viewBox="0 0 9 9"><rect x="1" y="1" width="7" height="7" rx="0.6" stroke="#2db37a" stroke-width="0.8" fill="none"/><path d="M1 2.6h7" stroke="#2db37a" stroke-width="0.8"/><path d="M4.5 3.5v2.8M3.4 5.2L4.5 6.3L5.6 5.2" stroke="#e04848" stroke-width="0.8" fill="none"/></svg>
<div class="a" style="left:793px;top:55px;font-size:7px;line-height:8px;color:#303133">应用</div>
<svg class="a" style="left:825px;top:54.5px" width="9" height="9" viewBox="0 0 9 9"><circle cx="4.5" cy="4.5" r="3.6" stroke="#303133" stroke-width="0.8" fill="none"/><circle cx="4.5" cy="4.5" r="1.5" stroke="#303133" stroke-width="0.8" fill="none"/></svg>
<div class="a" style="left:836px;top:55px;font-size:7px;line-height:8px;color:#303133">设置</div>
<div class="a" style="left:868px;top:51px;width:16px;height:16px;border-radius:8px 0 0 8px;background:#f5a41c"></div>
<div class="a" style="left:860px;top:46px;width:90px;height:26px;filter:blur(0.6px)"><div class="a" style="left:22px;top:5px;width:4px;height:16px;background:#f2d7a8"></div><div class="a" style="left:26px;top:5px;width:6px;height:16px;background:#f0f0f0"></div><div class="a" style="left:30px;top:5px;width:6px;height:15px;background:#e0e0e0"></div><div class="a" style="left:36px;top:4.5px;width:18px;height:8px;background:#dedede"></div><div class="a" style="left:40px;top:6px;width:8px;height:6px;background:#cfcfcf"></div><div class="a" style="left:36px;top:12.5px;width:18px;height:8px;background:#e9e9e9"></div><div class="a" style="left:54px;top:5px;width:12px;height:8px;background:#f1f1f1"></div><div class="a" style="left:54px;top:14px;width:8px;height:7px;background:#bdbdbd"></div><div class="a" style="left:60px;top:14px;width:6px;height:7px;background:#acacac"></div><div class="a" style="left:66px;top:14px;width:9px;height:7px;background:#cacaca"></div></div>
<div class="a" style="left:935.5px;top:61px;width:0.8px;height:5px;background:#707070"></div>
<svg class="a" style="left:944px;top:57px" width="7" height="5" viewBox="0 0 7 5"><path d="M1 1.2L3.5 3.7L6 1.2" stroke="#303133" stroke-width="0.8" fill="none"/></svg>
</body></html>
